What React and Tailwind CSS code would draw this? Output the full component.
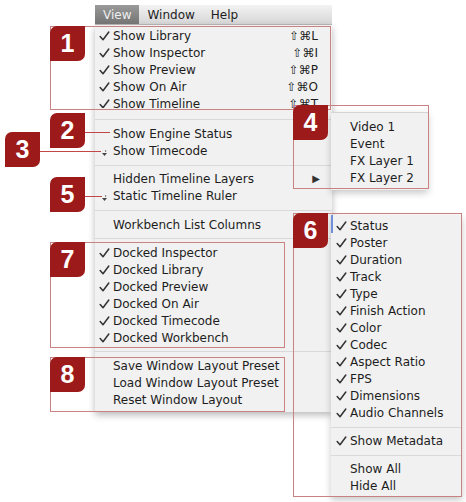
// View menu reference sheet: macOS-style menus with numbered red callouts
const mainGroups = [
  {
    clip: true,
    rows: [
      { check: 'on', label: 'Show Library', shortcut: '⇧⌘L' },
      { check: 'on', label: 'Show Inspector', shortcut: '⇧⌘I' },
      { check: 'on', label: 'Show Preview', shortcut: '⇧⌘P' },
      { check: 'on', label: 'Show On Air', shortcut: '⇧⌘O' },
      { check: 'on', label: 'Show Timeline', shortcut: '⇧⌘T' },
    ],
  },
  {
    sep: 'h-[17px] pt-[11px]',
    rows: [
      { label: 'Show Engine Status' },
      { check: 'mixed', label: 'Show Timecode' },
    ],
  },
  {
    sep: 'h-[11px] pt-[6px]',
    rows: [
      { label: 'Hidden Timeline Layers', arrow: true },
      { check: 'mixed', label: 'Static Timeline Ruler' },
    ],
  },
  {
    sep: 'h-[12px] pt-[6px]',
    rows: [{ label: 'Workbench List Columns' }],
  },
  {
    sep: 'h-[11px] pt-[5px]',
    rows: [
      { check: 'on', label: 'Docked Inspector' },
      { check: 'on', label: 'Docked Library' },
      { check: 'on', label: 'Docked Preview' },
      { check: 'on', label: 'Docked On Air' },
      { check: 'on', label: 'Docked Timecode' },
      { check: 'on', label: 'Docked Workbench' },
    ],
  },
  {
    sep: 'h-[11px] pt-[5px]',
    rows: [
      { label: 'Save Window Layout Preset' },
      { label: 'Load Window Layout Preset' },
      { label: 'Reset Window Layout' },
    ],
  },
];

const layers = ['Video 1', 'Event', 'FX Layer 1', 'FX Layer 2'];

const columnGroups = [
  ['Status', 'Poster', 'Duration', 'Track', 'Type', 'Finish Action', 'Color', 'Codec', 'Aspect Ratio', 'FPS', 'Dimensions', 'Audio Channels'].map((l) => ({ check: 'on', label: l })),
  [{ check: 'on', label: 'Show Metadata' }],
  [{ label: 'Show All' }, { label: 'Hide All' }],
];

const Check = () => (
  <svg width="11" height="10" viewBox="0 0 11 10">
    <path d="M1.2 5.6 L4 8.8 L9.8 1" fill="none" stroke="#333" strokeWidth="1.5" strokeLinecap="round" strokeLinejoin="round" />
  </svg>
);

// little "mixed" glyph used by the ruler/timecode rows
const Mixed = () => (
  <svg width="7" height="7" viewBox="0 0 7 7" className="ml-[2px] mt-[5px]">
    <circle cx="4.6" cy="1" r="0.7" fill="#555" />
    <path d="M1 3 L3.5 6 L6 3 Z" fill="#444" />
  </svg>
);

const Row = ({ check, label, shortcut, arrow, sub }) => (
  <div className={`flex h-[17px] items-center ${sub ? 'pr-[8px]' : 'pr-[12px]'}`}>
    <span className={`flex shrink-0 items-center ${sub ? 'w-[19px] pl-[5px]' : 'w-[18px] pl-[4px]'}`}>
      {check === 'on' && <Check />}
      {check === 'mixed' && <Mixed />}
    </span>
    <span className="flex-1 whitespace-nowrap">{label}</span>
    {shortcut && <span className="whitespace-nowrap pr-[2px]">{shortcut}</span>}
    {arrow && <span className="text-[10px] text-[#333]">▶</span>}
  </div>
);

const Separator = ({ cls }) => (
  <div className={cls}>
    <div className="h-px bg-[#d9d9d9]" />
  </div>
);

const Badge = ({ n, cls }) => (
  <div
    className={`absolute flex h-[35px] w-[35px] items-center justify-center rounded-tl-[7px] rounded-br-[7px] bg-[#9d1a1a] font-['Liberation_Sans',sans-serif] text-[25px] font-bold text-white ${cls}`}
  >
    {n}
  </div>
);

const Box = ({ cls }) => <div className={`absolute border-[1.5px] border-[#c98282] ${cls}`} />;

export default function App() {
  return (
    <div className="relative h-[502px] w-[466px] overflow-hidden bg-white font-['DejaVu_Sans',sans-serif] text-[12px] text-[#1d1d1d]">
      <div className="pl-[95px] pt-[5px]">
        {/* Menu bar */}
        <div className="flex h-[20px] w-[237px] items-center border-b border-[#b9b9b9] bg-gradient-to-b from-[#f3f3f3] to-[#d6d6d6]">
          <div className="flex h-full items-center bg-gradient-to-b from-[#9a9a9a] to-[#747474] px-[8px] text-[#eeeeee]">View</div>
          <div className="px-[8px]">Window</div>
          <div className="px-[8px]">Help</div>
        </div>

        {/* Main View menu */}
        <div className="w-[237px] bg-[#f1f1f1] pb-[4px] pt-[2px] shadow-[0_3px_7px_rgba(0,0,0,0.28)]">
          {mainGroups.map((g, i) => (
            <div key={i}>
              {g.sep && <Separator cls={g.sep} />}
              <div className={g.clip ? 'h-[81px] overflow-hidden' : ''}>
                {g.rows.map((r) => (
                  <Row key={r.label} {...r} />
                ))}
              </div>
            </div>
          ))}
        </div>
      </div>

      {/* Hidden Timeline Layers submenu */}
      <div className="absolute left-[331px] top-[112px] w-[97px] border-t border-[#d4d4d4] bg-[#f1f1f1] pb-[4px] pt-[5px] shadow-[0_3px_7px_rgba(0,0,0,0.22)]">
        {layers.map((l) => (
          <Row key={l} label={l} sub />
        ))}
      </div>

      {/* Workbench List Columns submenu */}
      <div className="absolute left-[331px] top-[215px] w-[131px] bg-[#f1f1f1] pb-[3px] pt-[2px] shadow-[0_3px_7px_rgba(0,0,0,0.22)]">
        <div className="absolute left-0 top-0 h-[18px] w-[2px] bg-[#6f8fd8]" />
        {columnGroups.map((g, i) => (
          <div key={i}>
            {i > 0 && <Separator cls="h-[11px] pt-[6px]" />}
            {g.map((r) => (
              <Row key={r.label} {...r} sub />
            ))}
          </div>
        ))}
      </div>

      {/* Callout boxes */}
      <Box cls="left-[50px] top-[26px] h-[84px] w-[281px]" />
      <Box cls="left-[293px] top-[105px] h-[84px] w-[136px]" />
      <Box cls="left-[293px] top-[213px] h-[284px] w-[169px]" />
      <Box cls="left-[50px] top-[242px] h-[106px] w-[235px]" />
      <Box cls="left-[50px] top-[357px] h-[55px] w-[235px]" />

      {/* Leader lines */}
      <div className="absolute left-[84px] top-[132px] h-px w-[26px] bg-[#c24848]" />
      <div className="absolute left-[39px] top-[151px] h-px w-[62px] bg-[#c24848]" />
      <div className="absolute left-[84px] top-[196px] h-px w-[18px] bg-[#c24848]" />

      {/* Numbered badges */}
      <Badge n="1" cls="left-[50px] top-[26px]" />
      <Badge n="2" cls="left-[50px] top-[113px]" />
      <Badge n="3" cls="left-[5px] top-[132px]" />
      <Badge n="4" cls="left-[293px] top-[105px]" />
      <Badge n="5" cls="left-[50px] top-[177px]" />
      <Badge n="6" cls="left-[293px] top-[213px]" />
      <Badge n="7" cls="left-[50px] top-[242px]" />
      <Badge n="8" cls="left-[50px] top-[357px]" />
    </div>
  );
}
